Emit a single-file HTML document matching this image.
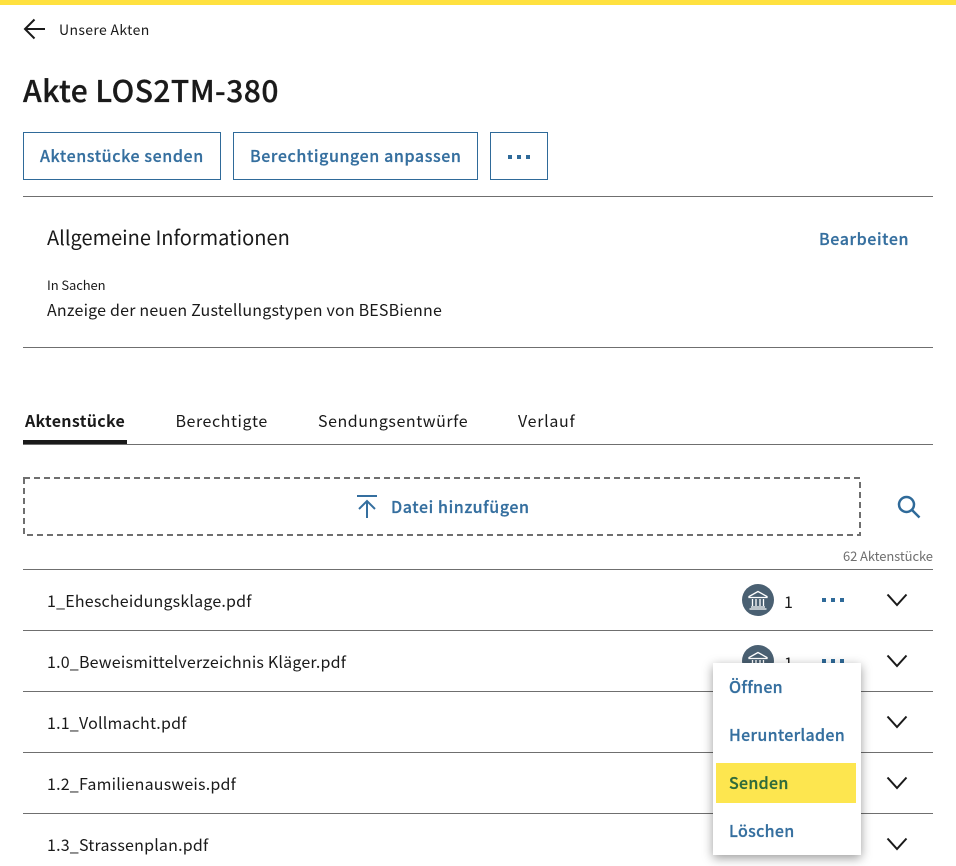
<!DOCTYPE html>
<html lang="de">
<head>
<meta charset="utf-8">
<title>Akte LOS2TM-380</title>
<style>
html,body{margin:0;padding:0;background:#fff;}
body{width:956px;height:866px;position:relative;overflow:hidden;font-family:"Noto Sans CJK JP","Liberation Sans",sans-serif;color:#1a1a1a;}
.t{position:absolute;white-space:nowrap;line-height:24px;font-size:16px;letter-spacing:.2px;}
.b{font-weight:500;color:#356f9f;letter-spacing:.6px;-webkit-text-stroke:.25px #356f9f;}
.m{letter-spacing:.3px;}
.line{position:absolute;left:23px;width:910px;height:1px;background:#6f6f6f;}
.btn{position:absolute;top:132px;height:46px;border:1px solid #2f6a99;}
svg{position:absolute;overflow:visible;}
.dots{position:absolute;width:4px;height:4px;background:#2f6a99;box-shadow:9px 0 #2f6a99,18px 0 #2f6a99;}
.chev{fill:none;stroke:#1a1a1a;stroke-width:2;}
</style>
</head>
<body>
<div style="position:absolute;left:0;top:0;width:956px;height:5px;background:#ffe13f;"></div>

<svg style="left:23px;top:18px" width="24" height="24" viewBox="0 0 24 24"><path d="M22 11H2M11.500 1.500 2 11l9.500 9.500" fill="none" stroke="#1a1a1a" stroke-width="2"/></svg>
<div class="t" style="left:59px;top:18px;font-size:14px;letter-spacing:.35px;">Unsere Akten</div>
<div class="t" style="left:23px;top:68px;font-size:30px;line-height:42px;font-weight:500;letter-spacing:.45px;-webkit-text-stroke:.3px #1a1a1a;">Akte LOS2TM-380</div>

<div class="btn" style="left:23px;width:196px;"></div>
<div class="t b" style="left:40px;top:143px;">Aktenstücke senden</div>
<div class="btn" style="left:233px;width:243px;"></div>
<div class="t b" style="left:250px;top:143px;">Berechtigungen anpassen</div>
<div class="btn" style="left:490px;width:56px;"></div>
<div class="dots" style="left:508px;top:155px;"></div>

<div class="line" style="top:196px;"></div>
<div class="t" style="left:47px;top:225px;font-size:20px;letter-spacing:0;">Allgemeine Informationen</div>
<div class="t b" style="left:819px;top:226px;">Bearbeiten</div>
<div class="t" style="left:47px;top:273px;font-size:13px;letter-spacing:-.1px;">In Sachen</div>
<div class="t" style="left:47px;top:297px;">Anzeige der neuen Zustellungstypen von BESBienne</div>
<div class="line" style="top:347px;"></div>

<div class="t" style="left:25px;top:408px;font-weight:700;letter-spacing:.3px;">Aktenstücke</div>
<div class="t" style="left:175.500px;top:408px;letter-spacing:.55px;">Berechtigte</div>
<div class="t" style="left:318px;top:408px;letter-spacing:.55px;">Sendungsentwürfe</div>
<div class="t" style="left:518px;top:408px;letter-spacing:.7px;">Verlauf</div>
<div class="line" style="top:444px;"></div>
<div style="position:absolute;left:23px;top:440px;width:104px;height:4px;background:#1a1a1a;"></div>

<svg style="left:23px;top:477px" width="838" height="59"><rect x="1" y="1" width="836" height="57" fill="none" stroke="#6f6f6f" stroke-width="2" stroke-dasharray="6 4"/></svg>
<svg style="left:355px;top:495px" width="24" height="24" viewBox="0 0 24 24"><path d="M2 1h20M12 23V6M4 14l8-8 8 8" fill="none" stroke="#356f9f" stroke-width="2"/></svg>
<div class="t b" style="left:391px;top:494px;">Datei hinzufügen</div>
<svg style="left:896px;top:494px" width="26" height="26" viewBox="0 0 26 26"><circle cx="10.500" cy="10.500" r="7.500" fill="none" stroke="#2f6a99" stroke-width="2.500"/><path d="M16 16l7.500 7.500" stroke="#2f6a99" stroke-width="2.500" fill="none"/></svg>
<div class="t" style="left:843px;top:544px;font-size:13px;color:#6f6f6f;letter-spacing:-.1px;">62 Aktenstücke</div>

<div class="line" style="top:569px;"></div>
<div class="t" style="left:47px;top:588px;">1_Ehescheidungsklage.pdf</div>
<svg style="left:742px;top:584px" width="32" height="32" viewBox="0 0 32 32"><circle cx="16" cy="16" r="16" fill="#4a6072"/><path d="M16 7.500 7 12.500v1h18v-1zM9 23h14M7.500 25h17M10.500 15v7M14 15v7M18 15v7M21.500 15v7" fill="none" stroke="#fff" stroke-width="1.300"/></svg>
<div class="t" style="left:784px;top:589px;">1</div>
<div class="dots" style="left:822px;top:598px;"></div>
<svg style="left:886px;top:593px" width="22" height="14"><path class="chev" d="M1.500 1.500 11 12l9.500-10.500"/></svg>

<div class="line" style="top:630px;"></div>
<div class="t" style="left:47px;top:649px;">1.0_Beweismittelverzeichnis Kläger.pdf</div>
<svg style="left:742px;top:645px" width="32" height="32" viewBox="0 0 32 32"><circle cx="16" cy="16" r="16" fill="#4a6072"/><path d="M16 7.500 7 12.500v1h18v-1zM9 23h14M7.500 25h17M10.500 15v7M14 15v7M18 15v7M21.500 15v7" fill="none" stroke="#fff" stroke-width="1.300"/></svg>
<div class="t" style="left:784px;top:650px;">1</div>
<div class="dots" style="left:822px;top:659px;"></div>
<svg style="left:886px;top:654px" width="22" height="14"><path class="chev" d="M1.500 1.500 11 12l9.500-10.500"/></svg>

<div class="line" style="top:691px;"></div>
<div class="t" style="left:47px;top:710px;">1.1_Vollmacht.pdf</div>
<svg style="left:886px;top:715px" width="22" height="14"><path class="chev" d="M1.500 1.500 11 12l9.500-10.500"/></svg>

<div class="line" style="top:752px;"></div>
<div class="t" style="left:47px;top:771px;">1.2_Familienausweis.pdf</div>
<svg style="left:886px;top:776px" width="22" height="14"><path class="chev" d="M1.500 1.500 11 12l9.500-10.500"/></svg>

<div class="line" style="top:813px;"></div>
<div class="t" style="left:47px;top:832px;">1.3_Strassenplan.pdf</div>
<svg style="left:886px;top:837px" width="22" height="14"><path class="chev" d="M1.500 1.500 11 12l9.500-10.500"/></svg>

<div style="position:absolute;left:713px;top:663px;width:148px;height:192px;background:#fff;box-shadow:0 3px 10px rgba(0,0,0,.4);"></div>
<div style="position:absolute;left:716px;top:763px;width:140px;height:40px;background:#fde64f;"></div>
<div class="t b m" style="left:729px;top:674px;">Öffnen</div>
<div class="t b m" style="left:729px;top:722px;">Herunterladen</div>
<div class="t b m" style="left:729px;top:770px;color:#2f6a3a;-webkit-text-stroke:.25px #2f6a3a;">Senden</div>
<div class="t b m" style="left:729px;top:818px;">Löschen</div>
</body>
</html>
